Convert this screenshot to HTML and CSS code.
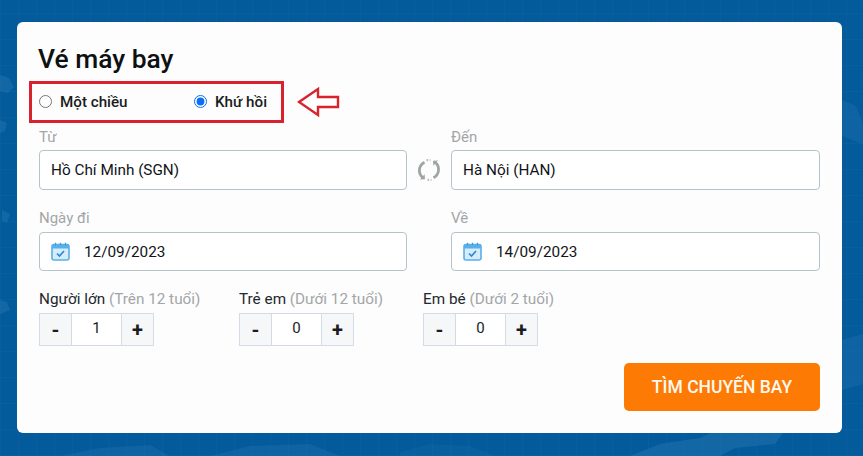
FILE: index.html
```html
<!DOCTYPE html>
<html lang="vi">
<head>
<meta charset="utf-8">
<title>Vé máy bay</title>
<link rel="stylesheet" href="styles.css">
</head>
<body>
<svg class="map" viewBox="0 0 863 456" aria-hidden="true">
  <g fill="#2a78b2" opacity=".45">
    <path d="M0 75l9 3 5 9-6 6-8-2zM0 120l7 3-2 8-5 2zM2 210l8 4-3 9-5-2zM0 300l7 2 3 8-10 4z"/>
    <path d="M60 456l40-8 50-3 20 11zM210 456l40-10 60-2 30 12z" opacity=".7"/>
    <path d="M630 456l30-12 40-6 25-12 30-6 30 10-10 14-40 4-15 8z"/>
    <path d="M842 340l21-6v50l-21 6zM842 100l14 6 7 18v20l-21-8z" opacity=".7"/>
    <path d="M400 452l30-8 40 2 25 10h-95z" opacity=".4"/>
  </g>
</svg>
<main class="card">
  <h1 class="title">Vé máy bay</h1>
  <div class="trip">
    <label class="radio-item radio-one"><input type="radio" name="trip" class="radio"><span>Một chiều</span></label>
    <label class="radio-item"><input type="radio" name="trip" class="radio" checked><span>Khứ hồi</span></label>
  </div>
  <div class="row row-route">
    <div class="field">
      <div class="label">Từ</div>
      <div class="box">Hồ Chí Minh (SGN)</div>
    </div>
    <div class="swap">
      <svg width="24" height="24" viewBox="0 0 24 24" fill="none" aria-hidden="true">
        <path d="M7.500 4.200C1.500 7.500 .8 15 5.500 19.500" stroke="#9fa6a6" stroke-width="2.800"/>
        <path d="M16.500 19.800C22.500 16.500 23.200 9 18.500 4.500" stroke="#9fa6a6" stroke-width="2.800"/>
        <path d="M3 21.500l5-.2-.4-5zM21 2.500l-5 .2.400 5z" fill="#9fa6a6"/>
        <path d="M9.500 2.200h4M10.500 21.800h4" stroke="#b9bebe" stroke-width="2.200" stroke-dasharray="1.600 1.600"/>
      </svg>
    </div>
    <div class="field">
      <div class="label">Đến</div>
      <div class="box">Hà Nội (HAN)</div>
    </div>
  </div>
  <div class="row row-date">
    <div class="field">
      <div class="label">Ngày đi</div>
      <div class="box box-date">
        <svg class="cal" width="19" height="19" viewBox="0 0 19 19" aria-hidden="true">
          <rect x="1" y="2.500" width="17" height="15.500" rx="2" fill="#d7ecfb" stroke="#57b0ea" stroke-width="1.600"/>
          <path d="M1 3.500a1.500 1.500 0 0 1 1.500-1.500h14a1.500 1.500 0 0 1 1.500 1.500V6.500H1z" fill="#57b0ea"/>
          <path d="M4.500 .8v2.500M9.500 .8v2.500M14.500 .8v2.500" stroke="#3a97d8" stroke-width="1.200"/>
          <path d="M6 11.500l2.500 2.500 4.500-5" fill="none" stroke="#2f88cf" stroke-width="1.700"/>
        </svg>
        <span>12/09/2023</span>
      </div>
    </div>
    <div class="spacer"></div>
    <div class="field">
      <div class="label">Về</div>
      <div class="box box-date">
        <svg class="cal" width="19" height="19" viewBox="0 0 19 19" aria-hidden="true">
          <rect x="1" y="2.500" width="17" height="15.500" rx="2" fill="#d7ecfb" stroke="#57b0ea" stroke-width="1.600"/>
          <path d="M1 3.500a1.500 1.500 0 0 1 1.500-1.500h14a1.500 1.500 0 0 1 1.500 1.500V6.500H1z" fill="#57b0ea"/>
          <path d="M4.500 .8v2.500M9.500 .8v2.500M14.500 .8v2.500" stroke="#3a97d8" stroke-width="1.200"/>
          <path d="M6 11.500l2.500 2.500 4.500-5" fill="none" stroke="#2f88cf" stroke-width="1.700"/>
        </svg>
        <span>14/09/2023</span>
      </div>
    </div>
  </div>
  <div class="pax">
    <div class="pax-item pax-adult">
      <div class="pax-label">Người lớn <span class="muted">(Trên 12 tuổi)</span></div>
      <div class="counter"><div class="step">-</div><div class="count">1</div><div class="step">+</div></div>
    </div>
    <div class="pax-item pax-child">
      <div class="pax-label">Trẻ em <span class="muted">(Dưới 12 tuổi)</span></div>
      <div class="counter"><div class="step">-</div><div class="count">0</div><div class="step">+</div></div>
    </div>
    <div class="pax-item">
      <div class="pax-label">Em bé <span class="muted">(Dưới 2 tuổi)</span></div>
      <div class="counter"><div class="step">-</div><div class="count">0</div><div class="step">+</div></div>
    </div>
  </div>
  <div class="actions"><button class="search" type="button">TÌM CHUYẾN BAY</button></div>
</main>
<div class="mark"></div>
<svg class="arrow" width="44" height="32" viewBox="0 0 44 32" aria-hidden="true">
  <path d="M2 16L21 3v8h20v10H21v8z" fill="#fff" stroke="#d8232f" stroke-width="2.400"/>
</svg>
</body>
</html>
```
FILE: styles.css
```css
* { box-sizing: border-box; }
html, body { height: 100%; }
body {
  margin: 0;
  padding: 22px 21px 23px 17px;
  overflow: hidden;
  position: relative;
  font-family: Roboto, "Liberation Sans", sans-serif;
  color: #15181c;
  background-color: #035b9c;
  background-image:
    repeating-linear-gradient(90deg, rgba(255,255,255,.025) 0 1px, transparent 1px 18px),
    repeating-linear-gradient(0deg, rgba(255,255,255,.02) 0 1px, transparent 1px 26px);
}
.map { position: absolute; inset: 0; width: 863px; height: 456px; }
.card {
  position: relative;
  height: 411px;
  background: #fdfdfd;
  border-radius: 6px;
  padding: 22px;
}
.title {
  margin: 0 0 0 -1px;
  font-size: 26.4px;
  line-height: 30px;
  font-weight: 500;
  color: #0e1013;
}
.trip {
  display: flex;
  align-items: center;
  height: 22px;
  margin-top: 17px;
  font-size: 15.2px;
  font-weight: 500;
  color: #1a1c20;
}
.radio-item { display: flex; align-items: center; }
.radio-one { width: 155px; }
.radio {
  appearance: auto;
  width: 13px;
  height: 13px;
  margin: 0 8px 2px 0;
  accent-color: #0a6ff0;
}
.row { display: flex; }
.row-route { margin-top: 15px; }
.row-date { margin-top: 19px; }
.row-date .label { margin-bottom: 5px; }
.field { width: 368px; }
.field:last-child { width: 369px; }
.label {
  font-size: 15px;
  line-height: 18px;
  margin-bottom: 4px;
  color: #a3a6a8;
}
.box {
  display: flex;
  align-items: center;
  height: 40px;
  padding: 0 11px;
  background: #fff;
  border: 1px solid #b4c4c9;
  border-radius: 4px;
  font-size: 15.3px;
  color: #111418;
}
.box-date { height: 39px; }
.cal { margin-right: 14px; flex: none; }
.swap {
  width: 44px;
  align-self: flex-end;
  height: 40px;
  display: flex;
  align-items: center;
  justify-content: center;
}
.spacer { width: 44px; }
.pax { display: flex; margin-top: 19px; }
.pax-item { width: 184px; }
.pax-adult { width: 200px; }
.pax-label { font-size: 15.3px; line-height: 18px; margin-bottom: 5px; color: #24282c; }
.muted { color: #a3a6a8; }
.counter {
  display: flex;
  width: 115px;
  height: 33px;
  border: 1px solid #d3dce6;
}
.step {
  width: 31px;
  flex: none;
  display: flex;
  align-items: center;
  justify-content: center;
  background: #f6f7f8;
  font-size: 20px;
  font-weight: 700;
  color: #1a1c20;
}
.count {
  flex: 1;
  display: flex;
  align-items: center;
  justify-content: center;
  background: #fff;
  border-left: 1px solid #d3dce6;
  border-right: 1px solid #d3dce6;
  font-size: 15px;
  padding-bottom: 3px;
  color: #1a1c20;
}
.actions { display: flex; justify-content: flex-end; margin-top: 17px; }
.search {
  width: 196px;
  height: 48px;
  border: 0;
  border-radius: 5px;
  background: #fd7a05;
  color: #fff9f0;
  font-family: inherit;
  font-size: 17.5px;
  font-weight: 500;
  padding: 0;
}
.mark {
  position: absolute;
  left: 29px;
  top: 81px;
  width: 255px;
  height: 42px;
  border: 3px solid #d8232f;
}
.arrow { position: absolute; left: 297px; top: 86px; }
```
